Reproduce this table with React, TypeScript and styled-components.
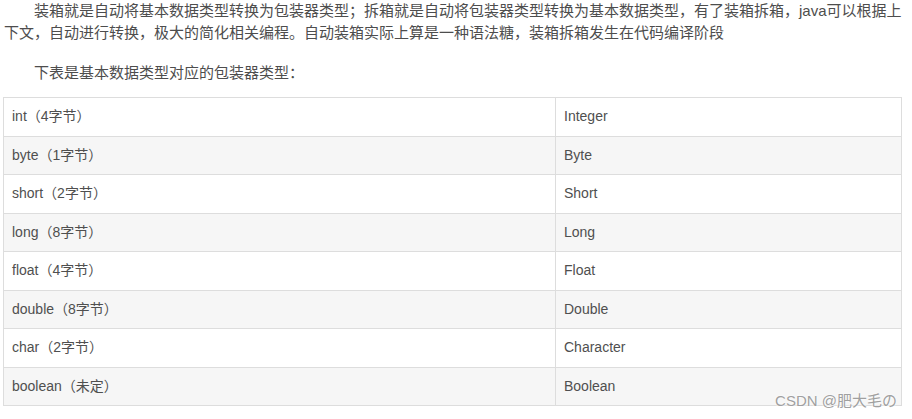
import styled, { createGlobalStyle } from 'styled-components';

const rows: [string, string][] = [
  ['int（4字节）', 'Integer'],
  ['byte（1字节）', 'Byte'],
  ['short（2字节）', 'Short'],
  ['long（8字节）', 'Long'],
  ['float（4字节）', 'Float'],
  ['double（8字节）', 'Double'],
  ['char（2字节）', 'Character'],
  ['boolean（未定）', 'Boolean'],
];

function App(): JSX.Element {
  return (
    <Page>
      <GlobalStyle />
      <Paragraph>
        装箱就是自动将基本数据类型转换为包装器类型；拆箱就是自动将包装器类型转换为基本数据类型，有了装箱拆箱，java可以根据上下文，自动进行转换，极大的简化相关编程。自动装箱实际上算是一种语法糖，装箱拆箱发生在代码编译阶段
      </Paragraph>
      <Paragraph>下表是基本数据类型对应的包装器类型：</Paragraph>
      <Figure>
        <Table>
          <tbody>
            {rows.map(([prim, wrapper]) => (
              <Row key={wrapper}>
                <Cell $first>{prim}</Cell>
                <Cell>{wrapper}</Cell>
              </Row>
            ))}
          </tbody>
        </Table>
        <Watermark>CSDN @肥大毛の</Watermark>
      </Figure>
    </Page>
  );
}

export default App;

const GlobalStyle = createGlobalStyle`
  body {
    margin: 0;
    background: #fff;
    font-family: "Liberation Sans", "Noto Sans CJK SC", sans-serif;
    color: #4d4d4d;
  }
`;

const Page = styled.div`
  width: 900px;
  padding: 0 0 14px 3px;
`;

const Paragraph = styled.p`
  margin: 0 0 18px 1px;
  font-size: 15px;
  line-height: 22px;
  text-indent: 2em;
`;

const Figure = styled.div`
  position: relative;
  margin-top: -5px;
`;

const Table = styled.table`
  width: 899px;
  border-collapse: collapse;
  font-size: 14px;
  color: #4f4f4f;
`;

const Row = styled.tr`
  background: #fff;

  &:nth-child(even) {
    background: #f6f6f6;
  }
`;

const Cell = styled.td<{ $first?: boolean }>`
  width: ${(p) => (p.$first ? '535px' : 'auto')};
  padding: 8px;
  line-height: 21.5px;
  border: 1px solid #ddd;
  text-align: left;
`;

const Watermark = styled.span`
  position: absolute;
  right: 6px;
  bottom: -4px;
  font-size: 15px;
  line-height: 18px;
  color: #a0a0a0;
  text-shadow: 0 0 2px #fff, 0 0 2px #fff;
  pointer-events: none;
`;
